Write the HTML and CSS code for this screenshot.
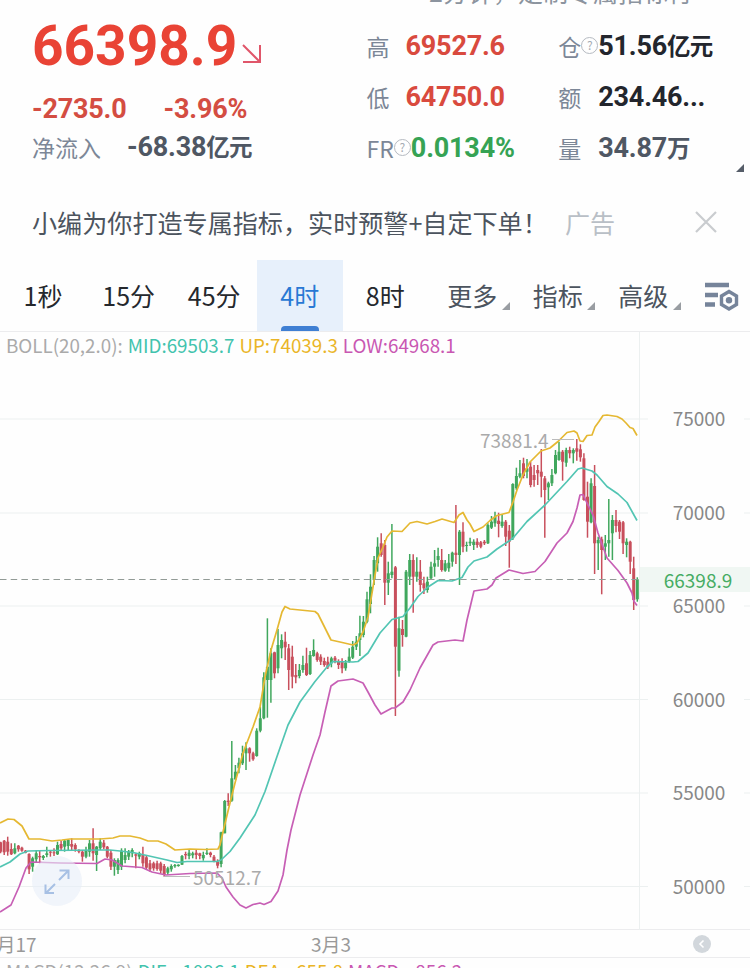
FILE: index.html
```html
<!DOCTYPE html>
<html lang="zh-CN">
<head>
    <meta charset="UTF-8">
    <meta name="viewport" content="width=device-width, initial-scale=1.0">
    <title>行情</title>
    <link rel="stylesheet" href="styles.css">
</head>
<body>

    <!-- Ticker line, scrolled almost out of view -->
    <div class="ticker"><span>2分钟，定制专属指标行</span></div>

    <!-- Quote summary -->
    <div class="quote">
        <div class="quote-main">
            <div class="last-price">66398.9<svg class="trend" viewBox="0 0 20 20"><path d="M1 1L18 18M1 18H18V1"/></svg></div>
            <div class="change"><span>-2735.0</span><span>-3.96%</span></div>
            <div class="flow"><span class="label">净流入</span><span class="value">-68.38<i>亿元</i></span></div>
        </div>
        <div class="stats">
            <div class="stat"><span class="label">高</span><span class="value down">69527.6</span></div>
            <div class="stat"><span class="label">低</span><span class="value down">64750.0</span></div>
            <div class="stat"><span class="label">FR<b class="help">?</b></span><span class="value up">0.0134%</span></div>
        </div>
        <div class="stats stats-right">
            <div class="stat"><span class="label">仓<b class="help">?</b></span><span class="value dark">51.56<i>亿元</i></span></div>
            <div class="stat"><span class="label">额</span><span class="value dark">234.46...</span></div>
            <div class="stat"><span class="label">量</span><span class="value">34.87<i>万</i></span></div>
        </div>
        <div class="expand"></div>
    </div>

    <!-- Ad -->
    <div class="ad">
        <span class="ad-text">小编为你打造专属指标，实时预警+自定下单！</span>
        <span class="ad-tag">广告</span>
        <svg class="ad-close" viewBox="0 0 22 22"><path d="M1 1L21 21M21 1L1 21"/></svg>
    </div>

    <!-- Period tabs -->
    <div class="tabs">
        <div class="tab tab-1s">1秒</div>
        <div class="tab">15分</div>
        <div class="tab">45分</div>
        <div class="tab active">4时</div>
        <div class="tab">8时</div>
        <div class="tab menu">更多</div>
        <div class="tab menu">指标</div>
        <div class="tab menu">高级</div>
        <svg class="settings" viewBox="0 0 34 29">
            <path d="M0 3H24M0 13H13M0 22.500H10" stroke-width="4.500"/>
            <path d="M24 9.500L31.500 14V22.500L24 27L16.500 22.500V14Z" stroke-width="3.400"/>
            <circle cx="24" cy="18.200" r="3.200"/>
        </svg>
    </div>

    <!-- Candlestick chart -->
    <div class="chart">
        <div class="legend">
            <span>BOLL(20,2.0):</span>
            <span class="mid">MID:69503.7</span>
            <span class="upper">UP:74039.3</span>
            <span class="low">LOW:64968.1</span>
        </div>
        <svg class="plot" viewBox="0 332 750 598">
            <path class="grid" d="M0 419H648M0 513H648M0 606H648M0 699.500H648M0 793H648M0 886.500H648M744 419H750M744 513H750M744 606H750M744 699.500H750M744 793H750M744 886.500H750M639.500 332V930"/>
            <g id="candles"></g>
            <g id="bands"></g>
            <path class="current" d="M0 579.500H639"/>
            <rect class="current-bg" x="640" y="567" width="110" height="25"/>
            <path class="leader" d="M552 439.500H574M164 876.500H190"/>
            <text class="mark" x="480" y="447.500">73881.4</text>
            <text class="mark" x="193" y="885">50512.7</text>
            <g class="axis">
                <text x="699" y="425.500">75000</text>
                <text x="699" y="519.500">70000</text>
                <text x="699" y="613">65000</text>
                <text x="699" y="706.500">60000</text>
                <text x="699" y="800">55000</text>
                <text x="699" y="893.500">50000</text>
                <text class="now" x="698" y="587.500">66398.9</text>
            </g>
            <circle class="full-bg" cx="57" cy="881" r="25"/>
            <path class="full" d="M59 880L68 871M59.500 870.500H68.500V879M55 884L46 893M45.500 884.500V893H54"/>
        </svg>
    </div>

    <!-- Time axis -->
    <div class="dates">
        <span class="date-first">2月17</span>
        <span class="date">3月3</span>
        <svg class="back" viewBox="0 0 18 18"><circle cx="9" cy="9" r="9"/><path d="M10.500 5.500L7 9L10.500 12.500"/></svg>
    </div>

    <div class="macd">
        <span>MACD(12,26,9)</span>
        <span class="mid">DIF: -1096.1</span>
        <span class="upper">DEA: -655.8</span>
        <span class="low">MACD: -856.2</span>
    </div>

    <script>
        const START_X = 0.6;
        const STEP = 3.557;

        // Each bar: direction (1 up, 0 down), high, low, body top, body bottom.
        // Values are thirds of a pixel below the segment's base line.
        const segments = [
            { base: 800, bars: [
                [0,125,160,127,155],[0,120,165,122,157],[0,110,167,125,155],[0,130,165,147,163],[1,130,163,145,160],
                [0,135,155,137,148],[0,140,155,143,152],[0,150,160,152,158],[0,160,222,162,208],[1,170,215,175,200],
                [1,150,188,160,178],[0,150,190,168,172],[1,165,180,168,174],[1,140,172,160,165],[0,150,170,155,158],
                [0,145,168,157,160],[1,125,165,135,163],[0,122,150,132,145],[1,120,155,122,140],[1,118,150,120,138],
                [0,115,150,132,140],[0,130,155,135,148],[0,148,160,150,155],[0,150,185,155,170],[1,140,175,150,170],
                [1,120,170,130,155],[0,85,182,130,160],[1,138,213,140,165],[1,115,150,125,145],[0,120,148,128,142],
                [0,138,175,140,170],[0,150,210,158,200],[1,175,227,180,200],[1,175,222,180,210],[1,145,210,152,200],
                [1,145,190,165,180],[1,150,180,155,170],[1,145,172,150,160],[0,160,205,163,167],[1,155,178,160,170],
                [0,140,200,165,190],[0,165,207,172,203],[0,180,215,190,208],[0,185,212,190,205],[0,182,212,190,207],
                [0,185,220,190,212],[0,192,230,198,225],[1,200,225,205,218],[1,193,215,198,208],[1,192,203,195,199],
                [1,193,200,194,198],[1,165,195,168,194],[0,155,178,162,166],[1,148,178,158,168],[1,155,175,160,166],
                [0,150,178,158,165],[0,158,178,160,168],[1,155,182,165,175],[1,145,165,158,162],[0,155,172,158,165],
                [0,165,187,170,183],[0,178,205,185,197]
            ] },
            { base: 590, bars: [
                [1,725,832,727,822],[1,630,730,633,730],[0,610,648,632,636],[1,453,635,565,632],[1,525,570,545,568],
                [1,503,550,518,535],[1,467,525,490,520],[1,457,540,475,490],[0,472,515,475,490],[0,485,512,490,508],
                [1,415,500,422,498],[1,350,427,385,422],[1,247,388,262,385],[1,85,383,230,270],[1,175,338,190,270],
                [0,185,265,187,250],[1,117,250,165,235],[1,133,205,150,175],[0,125,210,155,172],[0,162,300,175,240],
                [0,167,295,200,260],[0,222,280,255,262],[1,222,265,240,258],[1,197,248,225,240],[0,173,258,220,255],
                [1,183,255,195,252],[1,148,200,180,198],[0,185,215,190,210],[0,193,225,200,215],[0,203,230,213,225],
                [0,200,237,215,232],[1,200,232,205,220],[0,198,220,203,212],[0,208,237,213,225]
            ] },
            { base: 480, bars: [
                [0,535,580,545,565],[1,540,572,548,565],[1,505,548,530,545],[1,483,537,500,533],[1,468,510,485,500],
                [1,407,528,460,480],[1,408,472,425,465],[1,335,430,358,425],[1,283,400,320,372],[1,228,315,240,300],
                [1,172,275,200,250],[0,160,230,190,225],[0,180,375,195,308],[1,245,345,280,308],[1,132,295,275,285],
                [0,258,708,262,500],[1,410,590,445,572],[0,420,500,447,465],[1,270,472,275,470],[1,222,315,240,290],
                [0,223,398,240,290],[1,232,305,275,290],[0,240,335,275,315],[0,290,342,310,325],[1,290,338,305,330],
                [1,245,298,260,295],[1,210,290,250,260],[1,203,260,228,240],[0,207,275,240,270],[1,240,275,250,272],
                [1,222,275,248,265],[1,215,260,218,245],[0,75,252,218,225],[1,150,315,155,225],[0,127,217,155,200],
                [1,185,215,195,198],[1,173,198,185,190],[1,178,210,185,195],[0,175,203,185,195],[0,183,205,187,200],
                [0,180,195,185,190],[1,130,192,135,190],[1,108,147,125,143],[1,95,140,110,130],[0,98,172,122,132],
                [1,103,143,125,138],[0,120,198,125,170]
            ] },
            { base: 400, bars: [
                [0,375,503,392,425],[1,250,420,252,415],[1,203,270,228,265],[1,180,235,220,230],[0,173,235,190,228],
                [1,177,235,205,215],[0,185,262,200,255],[0,195,260,225,240],[0,195,255,210,220],[0,147,292,215,230],
                [0,228,413,235,270],[1,245,300,250,262],[1,207,258,225,250],[1,150,223,165,220],[1,125,182,155,180],
                [0,150,242,155,185],[1,143,200,150,188],[0,140,175,150,160],[1,145,190,150,160],[0,117,182,145,155],
                [0,133,185,148,172],[0,160,302,175,300],[0,245,413,290,365],[1,235,370,250,367],[0,195,522,258,430],
                [1,410,510,420,430],[0,410,583,418,450],[1,405,480,430,440],[1,297,470,420,430],[1,345,480,360,400],
                [0,330,397,360,378],[0,360,417,365,395],[0,363,462,367,430],[1,415,472,425,435],[0,422,522,425,485],
                [0,470,630,505,600],[1,532,605,538,598]
            ] }
        ];

        const bands = {
            upper: '0,823 8,819 14,819.5 22,826 29,839 40,839 52,841 62,840 70,839 85,839 100,839 113,838 120,836 130,836 140,838 148,841 158,841 166,844 175,850 190,849 205,849.5 218,849 220,845 223,832 229,807 235,783 243,753 253,727 260,707 265,677 271,650 277,630 282,612 285,606.5 290,609 300,610 315,611.5 318,614 325,628 331,640 340,642 353,645 357,643 363,632 368,617 372,593 375,575 378,558 383,547 387,537 392,531 402,531.5 410,523 417,521.5 427,524 435,521.5 442,519 454,522.5 459,515 463,512.5 467,520 470,524 474,531.5 483,527 490,520.5 497,515.5 509,512.5 513,502 517,490 523,475 530,462 541,451 550,448 558,441.5 567,432.5 574,431 577,433 580,441 583,441.5 587,435.5 592,435 595,427 599,421.5 603,415.5 607,415 617,416.5 622,419 626,423 630,427.5 633,428.5 637,435.5',
            mid: '0,867 10,862 20,854 28,851 50,850.5 100,850 110,850 120,851 133,852.5 147,855.5 167,860 177,862.5 187,861.5 217,861.5 221,860 230,851.5 240,838 255,815 265,791.5 277,756.5 288,725 300,702 315,681.5 327,667 333,661.5 353,662 358,661.5 368,653 380,633 392,619.5 403,616.5 410,608 418,596.5 428,587 438,580.5 452,581 462,577.5 468,567 474,561 487,557 497,549 509,541 513,538 527,521.5 545,505 567,481.5 578,469 582,468 592,471 597,475 607,486.5 618,494 627,502.5 637,520.5',
            low: '0,912 11,905 19,887 26,868 31,862 60,863 97,863.5 105,859 112,860 122,866 142,867.5 152,872 166,875 190,873.5 217,873 222,878 226,887 233,897 240,905 246,908 253,904.5 260,903 264,904.5 271,901.5 278,891 283,875 287,850 291,830 300,795 313,755 320,735 325,712 331,686 338,681 353,679 363,683 368,692 375,705 381,714 392,708 395,708 403,702 410,690 420,668 433,645 438,642 455,640 463,641 467,620 474,591 487,589 492,585 496,578 509,570 523,573.5 535,571.5 545,561.5 557,543 567,533 573,521.5 577,508 580,495 583,494.5 587,503 593,515 598,533 607,558 618,570.5 627,583 632,593 634,601.5 637,605.5'
        };

        let index = 0;
        let candlesSvg = '';
        segments.forEach(segment => {
            segment.bars.forEach(([up, high, low, top, bottom]) => {
                const x = START_X + STEP * index++;
                const y = v => (segment.base + v / 3).toFixed(1);
                const cls = up ? 'candle-up' : 'candle-down';
                candlesSvg += `<path class="${cls}" d="M${x.toFixed(1)} ${y(high)}V${y(low)}"/>`;
                candlesSvg += `<path class="${cls} body" d="M${x.toFixed(1)} ${y(top)}V${y(bottom)}"/>`;
            });
        });
        document.getElementById('candles').innerHTML = candlesSvg;

        document.getElementById('bands').innerHTML = Object.keys(bands)
            .map(name => `<polyline class="band band-${name}" points="${bands[name]}"/>`)
            .join('');
    </script>
</body>
</html>
```

FILE: styles.css
```css
* {
    box-sizing: border-box;
}

body {
    margin: 0;
    height: 968px;
    overflow: hidden;
    background-color: #fefefe;
    color: #4c545e;
    font-family: "Noto Sans CJK SC", sans-serif;
}

.ticker {
    height: 21px;
    padding-left: 429px;
    overflow: hidden;
    color: #8c949f;
    font-size: 25px;
    line-height: 25px;
}

.ticker span {
    display: block;
    margin-top: -21px;
}

/* Quote summary */
.quote {
    display: flex;
    height: 159px;
    padding-left: 32px;
    position: relative;
}

.quote-main {
    width: 335px;
}

.last-price {
    display: flex;
    height: 62px;
    color: #e94335;
    font: bold 55px/50px Roboto, sans-serif;
}

.trend {
    width: 20px;
    height: 20px;
    margin: 23px 0 0 5px;
    fill: none;
    stroke: #e0566a;
    stroke-width: 2;
}

.change {
    display: flex;
    gap: 37px;
    height: 44px;
    color: #d44d42;
    font: bold 27px/52px Roboto, sans-serif;
    letter-spacing: -0.2px;
}

.flow {
    display: flex;
    gap: 26px;
    align-items: center;
    height: 40px;
}

.label {
    color: #7c8797;
    font-size: 23px;
    line-height: 36px;
    white-space: nowrap;
}

.value {
    color: #4f5763;
    font: bold 27px/40px Roboto, "Noto Sans CJK SC", sans-serif;
    letter-spacing: -0.2px;
    white-space: nowrap;
}

.value i {
    font: bold 23.5px/30px "Noto Sans CJK SC", sans-serif;
    letter-spacing: -0.7px;
}

.value.down {
    color: #d94a3e;
}

.value.up {
    color: #36a354;
}

.value.dark {
    color: #23262d;
}

.stats {
    width: 192px;
}

.stat {
    display: flex;
    align-items: center;
    height: 51px;
}

.stat .label {
    display: flex;
    flex: none;
    align-items: center;
    min-width: 39px;
    margin-top: -2px;
}

.stats-right .stat .label {
    min-width: 40px;
}

.help {
    flex: none;
    width: 17px;
    height: 17px;
    border: 1.5px solid #b5bac1;
    border-radius: 50%;
    color: #a5abb3;
    font-size: 12px;
    font-weight: normal;
    line-height: 14px;
    text-align: center;
}

.stat .value {
    flex: none;
    margin-top: -2px;
}

.expand {
    position: absolute;
    right: 6px;
    bottom: 8px;
    border-left: 8px solid transparent;
    border-bottom: 8px solid #555d68;
}

/* Ad */
.ad {
    display: flex;
    align-items: center;
    height: 80px;
    padding: 4px 33px 0 32px;
    font-size: 25.1px;
}

.ad-text {
    width: 533px;
    white-space: nowrap;
}

.ad-tag {
    color: #b9bfc6;
}

.ad-close {
    width: 22px;
    height: 22px;
    margin-left: auto;
    fill: none;
    stroke: #c9cccf;
    stroke-width: 2.2;
}

/* Period tabs */
.tabs {
    display: flex;
    height: 72px;
    border-bottom: 1px solid #ececee;
    font-size: 25px;
    line-height: 71px;
}

.tab {
    width: 85.5px;
    color: #25282d;
    text-align: center;
}

.tab-1s {
    width: 86px;
}

.tab.active {
    position: relative;
    background-color: #e7f0fb;
    color: #2878d4;
}

.tab.active::after {
    content: "";
    position: absolute;
    left: 24px;
    bottom: 0;
    width: 38px;
    height: 5px;
    border-radius: 4px 4px 0 0;
    background-color: #3f7fd3;
}

.tab.menu {
    position: relative;
    padding-left: 3px;
    color: #4c545e;
}

.tab.menu::after {
    content: "";
    position: absolute;
    right: 4px;
    bottom: 21px;
    border-left: 8px solid transparent;
    border-bottom: 8px solid #999da2;
}

.settings {
    width: 34px;
    height: 29px;
    margin: 22px 0 0 20px;
    fill: none;
    stroke: #76849a;
}

.settings circle {
    fill: #76849a;
    stroke: none;
}

/* Chart */
.chart {
    position: relative;
    height: 598px;
    border-bottom: 1px solid #ececee;
}

.legend,
.macd {
    display: flex;
    gap: 5px;
    padding-left: 6px;
    color: #aaaaaa;
    font-size: 18.8px;
    line-height: 25px;
    white-space: nowrap;
}

.legend {
    position: absolute;
    top: 0;
    left: 0;
}

.mid {
    color: #42c3ad;
}

.upper {
    color: #eab526;
}

.low {
    color: #c957b2;
}

.plot {
    display: block;
    width: 750px;
    height: 598px;
}

.grid {
    fill: none;
    stroke: #ecf0f0;
}

.candle-up {
    stroke: #40a75d;
    stroke-width: 1.5;
}

.candle-down {
    stroke: #c84f5c;
    stroke-width: 1.5;
}

.candle-up.body,
.candle-down.body {
    stroke-width: 3;
}

.band {
    fill: none;
    stroke-width: 1.7;
    stroke-linejoin: round;
}

.band-upper {
    stroke: #e5b832;
}

.band-mid {
    stroke: #52c5b3;
}

.band-low {
    stroke: #c75fb5;
}

.current {
    stroke: #929b96;
    stroke-width: 1.2;
    stroke-dasharray: 6.5 4.2;
}

.current-bg {
    fill: #f0f7f3;
}

.leader {
    stroke: #bbbbbb;
}

.plot text {
    font-size: 19px;
}

.mark {
    fill: #aaaaaa;
}

.axis text {
    fill: #888888;
    text-anchor: middle;
}

.axis .now {
    fill: #46ac63;
}

.full-bg {
    fill: #e8eef8;
    opacity: 0.6;
}

.full {
    fill: none;
    stroke: #a7c0e4;
    stroke-width: 2;
}

/* Time axis */
.dates {
    display: flex;
    align-items: center;
    height: 28px;
    border-bottom: 1px solid #ececee;
    color: #999999;
    font-size: 19px;
    line-height: 28px;
}

.date-first {
    width: 325px;
    margin-left: -14px;
}

.back {
    width: 18px;
    height: 18px;
    margin-left: auto;
    margin-right: 39px;
}

.back circle {
    fill: #d2d7dc;
}

.back path {
    fill: none;
    stroke: #ffffff;
    stroke-width: 1.6;
}

.macd {
    height: 10px;
    overflow: hidden;
}
```
